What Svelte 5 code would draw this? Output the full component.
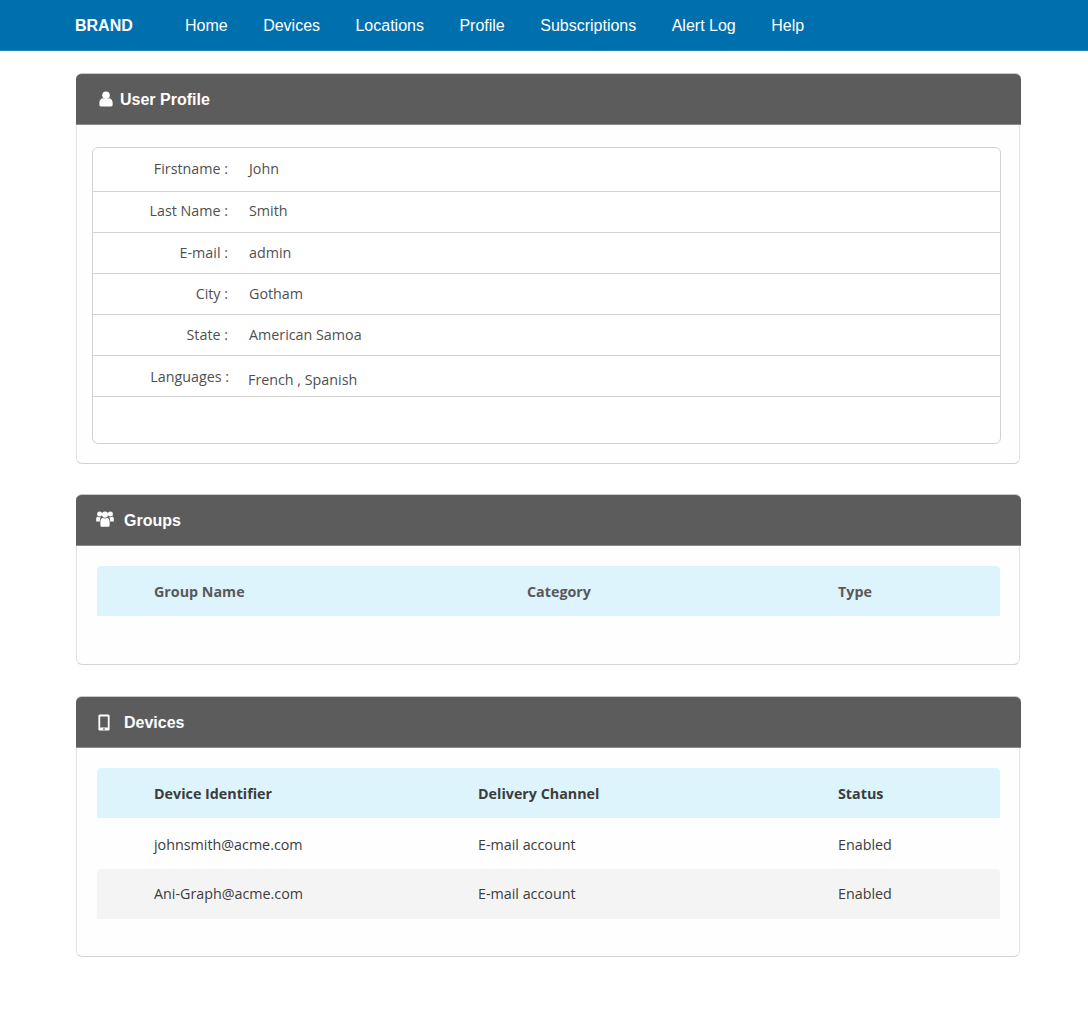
<script>
    const nav = ["Home", "Devices", "Locations", "Profile", "Subscriptions", "Alert Log", "Help"];
    const profile = [
        { label: "Firstname :", value: "John", cls: "" },
        { label: "Last Name :", value: "Smith", cls: "tight" },
        { label: "E-mail :", value: "admin", cls: "" },
        { label: "City :", value: "Gotham", cls: "" },
        { label: "State :", value: "American Samoa", cls: "" },
        { label: "Languages :", value: "French , Spanish", cls: "langs" }
    ];
    const devices = [
        { id: "johnsmith@acme.com", channel: "E-mail account", status: "Enabled" },
        { id: "Ani-Graph@acme.com", channel: "E-mail account", status: "Enabled" }
    ];
</script>

<nav class="navbar">
    <a class="brand" href="#top">BRAND</a>
    <ul class="nav_links">
        {#each nav as item}
            <li><a href="#top">{item}</a></li>
        {/each}
    </ul>
</nav>

<main class="page">
    <section class="panel">
        <header class="panel_head">
            <svg class="icon icon_user" viewBox="0 0 14 16" aria-hidden="true">
                <circle cx="7" cy="4.2" r="3.8" fill="currentColor" />
                <path d="M0.4 14V11.2C0.4 8.8 2.4 7.4 4 7.2C5.6 8.4 8.4 8.4 10 7.2C11.6 7.4 13.6 8.8 13.6 11.2V14C13.6 15 13 15.4 12 15.4H2C1 15.4 0.4 15 0.4 14Z" fill="currentColor" />
            </svg>
            <h2>User Profile</h2>
        </header>
        <div class="panel_body profile_body">
            <div class="profile_list">
                {#each profile as row}
                    <div class="profile_row {row.cls}">
                        <span class="label">{row.label}</span>
                        <span class="value">{row.value}</span>
                    </div>
                {/each}
                <div class="profile_spacer"></div>
            </div>
        </div>
    </section>

    <section class="panel">
        <header class="panel_head">
            <svg class="icon icon_group" viewBox="0 0 18 16" aria-hidden="true">
                <circle cx="3.6" cy="3" r="2.5" fill="currentColor" />
                <circle cx="14.4" cy="3" r="2.5" fill="currentColor" />
                <circle cx="9" cy="3.6" r="3.1" fill="currentColor" />
                <path d="M0.2 10.6V7.4C0.2 6.4 1 5.8 1.8 5.8C2.8 6.4 4 6.4 4.6 6.2C4.2 7.6 3.8 8.6 3.8 10.6Z" fill="currentColor" />
                <path d="M17.8 10.6V7.4C17.8 6.4 17 5.8 16.2 5.8C15.2 6.4 14 6.4 13.4 6.2C13.8 7.6 14.2 8.6 14.2 10.6Z" fill="currentColor" />
                <path d="M4.4 14.2V10.6C4.4 8.6 5.6 7.2 6.6 6.8C7.8 7.7 10.2 7.7 11.4 6.8C12.4 7.2 13.6 8.6 13.6 10.6V14.2C13.6 15.2 13 15.8 12 15.8H6C5 15.8 4.4 15.2 4.4 14.2Z" fill="currentColor" />
            </svg>
            <h2>Groups</h2>
        </header>
        <div class="panel_body">
            <div class="grid head muted groups_cols">
                <span>Group Name</span>
                <span>Category</span>
                <span>Type</span>
            </div>
            <div class="groups_empty"></div>
        </div>
    </section>

    <section class="panel devices_panel">
        <header class="panel_head">
            <svg class="icon icon_phone" viewBox="0 0 12 17" aria-hidden="true">
                <path fill-rule="evenodd" d="M2 0.4H10C11 0.4 11.6 1 11.6 2V15C11.6 16 11 16.6 10 16.6H2C1 16.6 0.4 16 0.4 15V2C0.4 1 1 0.4 2 0.4ZM2.2 2.6V13.6H9.8V2.6ZM6 14.2A0.9 0.9 0 1 0 6 16A0.9 0.9 0 1 0 6 14.2Z" fill="currentColor" />
            </svg>
            <h2>Devices</h2>
        </header>
        <div class="panel_body">
            <div class="grid head devices_cols">
                <span>Device Identifier</span>
                <span>Delivery Channel</span>
                <span>Status</span>
            </div>
            {#each devices as device, i}
                <div class="grid row devices_cols" class:alt={i % 2 === 1}>
                    <span>{device.id}</span>
                    <span>{device.channel}</span>
                    <span>{device.status}</span>
                </div>
            {/each}
            <div class="devices_foot"></div>
        </div>
    </section>
</main>

<style>
    :global(body) {
        background: #fff;
        font-family: "Open Sans", "Liberation Sans", sans-serif;
    }

    .navbar {
        display: flex;
        align-items: center;
        height: 49px;
        padding: 1px 0 0 75px;
        background: #006fae;
        border-bottom: 1px solid #2a86bb;
        font-family: "Liberation Sans", Arial, sans-serif;
        color: #fff;
    }

    .brand {
        width: 110px;
        color: #fff;
        font-size: 16px;
        font-weight: bold;
        text-decoration: none;
    }

    .nav_links {
        display: flex;
        gap: 35.45px;
        margin: 0;
        padding: 0;
        list-style: none;
    }

    .nav_links a {
        color: #fff;
        font-size: 16px;
        text-decoration: none;
    }

    .page {
        display: flex;
        flex-direction: column;
        gap: 30px;
        width: 945px;
        margin-left: 76px;
        padding-top: 22px;
    }

    .devices_panel {
        margin-top: 1px;
    }

    .panel_head {
        display: flex;
        align-items: center;
        height: 50px;
        padding-left: 20px;
        background: #5c5c5c;
        border-top: 1px solid #c9c9c9;
        border-bottom: 1px solid #8c8c8c;
        border-radius: 6px 6px 0 0;
        color: #fff;
    }

    .panel_head h2 {
        margin: 1px 0 0;
        font-family: "Liberation Sans", Arial, sans-serif;
        font-size: 16px;
        font-weight: bold;
    }

    .icon {
        flex: none;
        margin-right: 8px;
    }

    .icon_user {
        width: 14px;
        height: 16px;
        margin-left: 3px;
        margin-right: 7px;
    }

    .icon_group {
        width: 18px;
        height: 16px;
        margin-right: 10px;
        margin-top: -3px;
    }

    .icon_phone {
        width: 12px;
        height: 17px;
        margin-left: 2px;
        margin-right: 14px;
    }

    .panel_body {
        margin-right: 1px;
        padding: 20px 19px 0 20px;
        background: #fefefe;
        border: 1px solid #d4d4d4;
        border-top: 0;
        border-left-color: #e2e2e2;
        border-right-color: #e2e2e2;
        border-radius: 0 0 6px 6px;
    }

    .profile_body {
        padding: 22px 18px 19px 15px;
    }

    .profile_list {
        border: 1px solid #d2d2d2;
        border-radius: 6px;
        background: #fff;
        color: #505050;
        font-size: 14.3px;
    }

    .profile_row {
        display: flex;
        align-items: center;
        height: 40px;
        border-bottom: 1px solid #d2d2d2;
    }

    .profile_row:first-child {
        height: 43px;
    }

    .label {
        width: 135px;
        margin-top: -2px;
        text-align: right;
    }

    .value {
        margin-top: -2px;
        margin-left: 21px;
    }

    .tight .label,
    .tight .value {
        margin-top: -4px;
    }

    .langs .label {
        width: 136px;
        margin-top: 0;
    }

    .langs .value {
        margin-top: 7px;
        margin-left: 19px;
    }

    .profile_spacer {
        height: 46px;
    }

    .grid {
        display: grid;
        align-items: center;
        box-sizing: border-box;
        height: 50px;
        padding-left: 57px;
        font-size: 14.3px;
        color: #3c3c3c;
    }

    .groups_cols {
        grid-template-columns: 373px 311px 1fr;
    }

    .devices_cols {
        grid-template-columns: 324px 360px 1fr;
    }

    .head {
        background: #def4fd;
        border-radius: 4px 4px 0 0;
        font-weight: bold;
    }

    .muted {
        color: #595959;
    }

    .row {
        height: 51px;
        padding-top: 1px;
    }

    .alt {
        height: 50px;
        padding-top: 0;
        padding-bottom: 2px;
        background: #f4f4f4;
        border-radius: 3px 3px 0 0;
    }

    .groups_empty {
        height: 48px;
    }

    .devices_foot {
        height: 37px;
    }
</style>
